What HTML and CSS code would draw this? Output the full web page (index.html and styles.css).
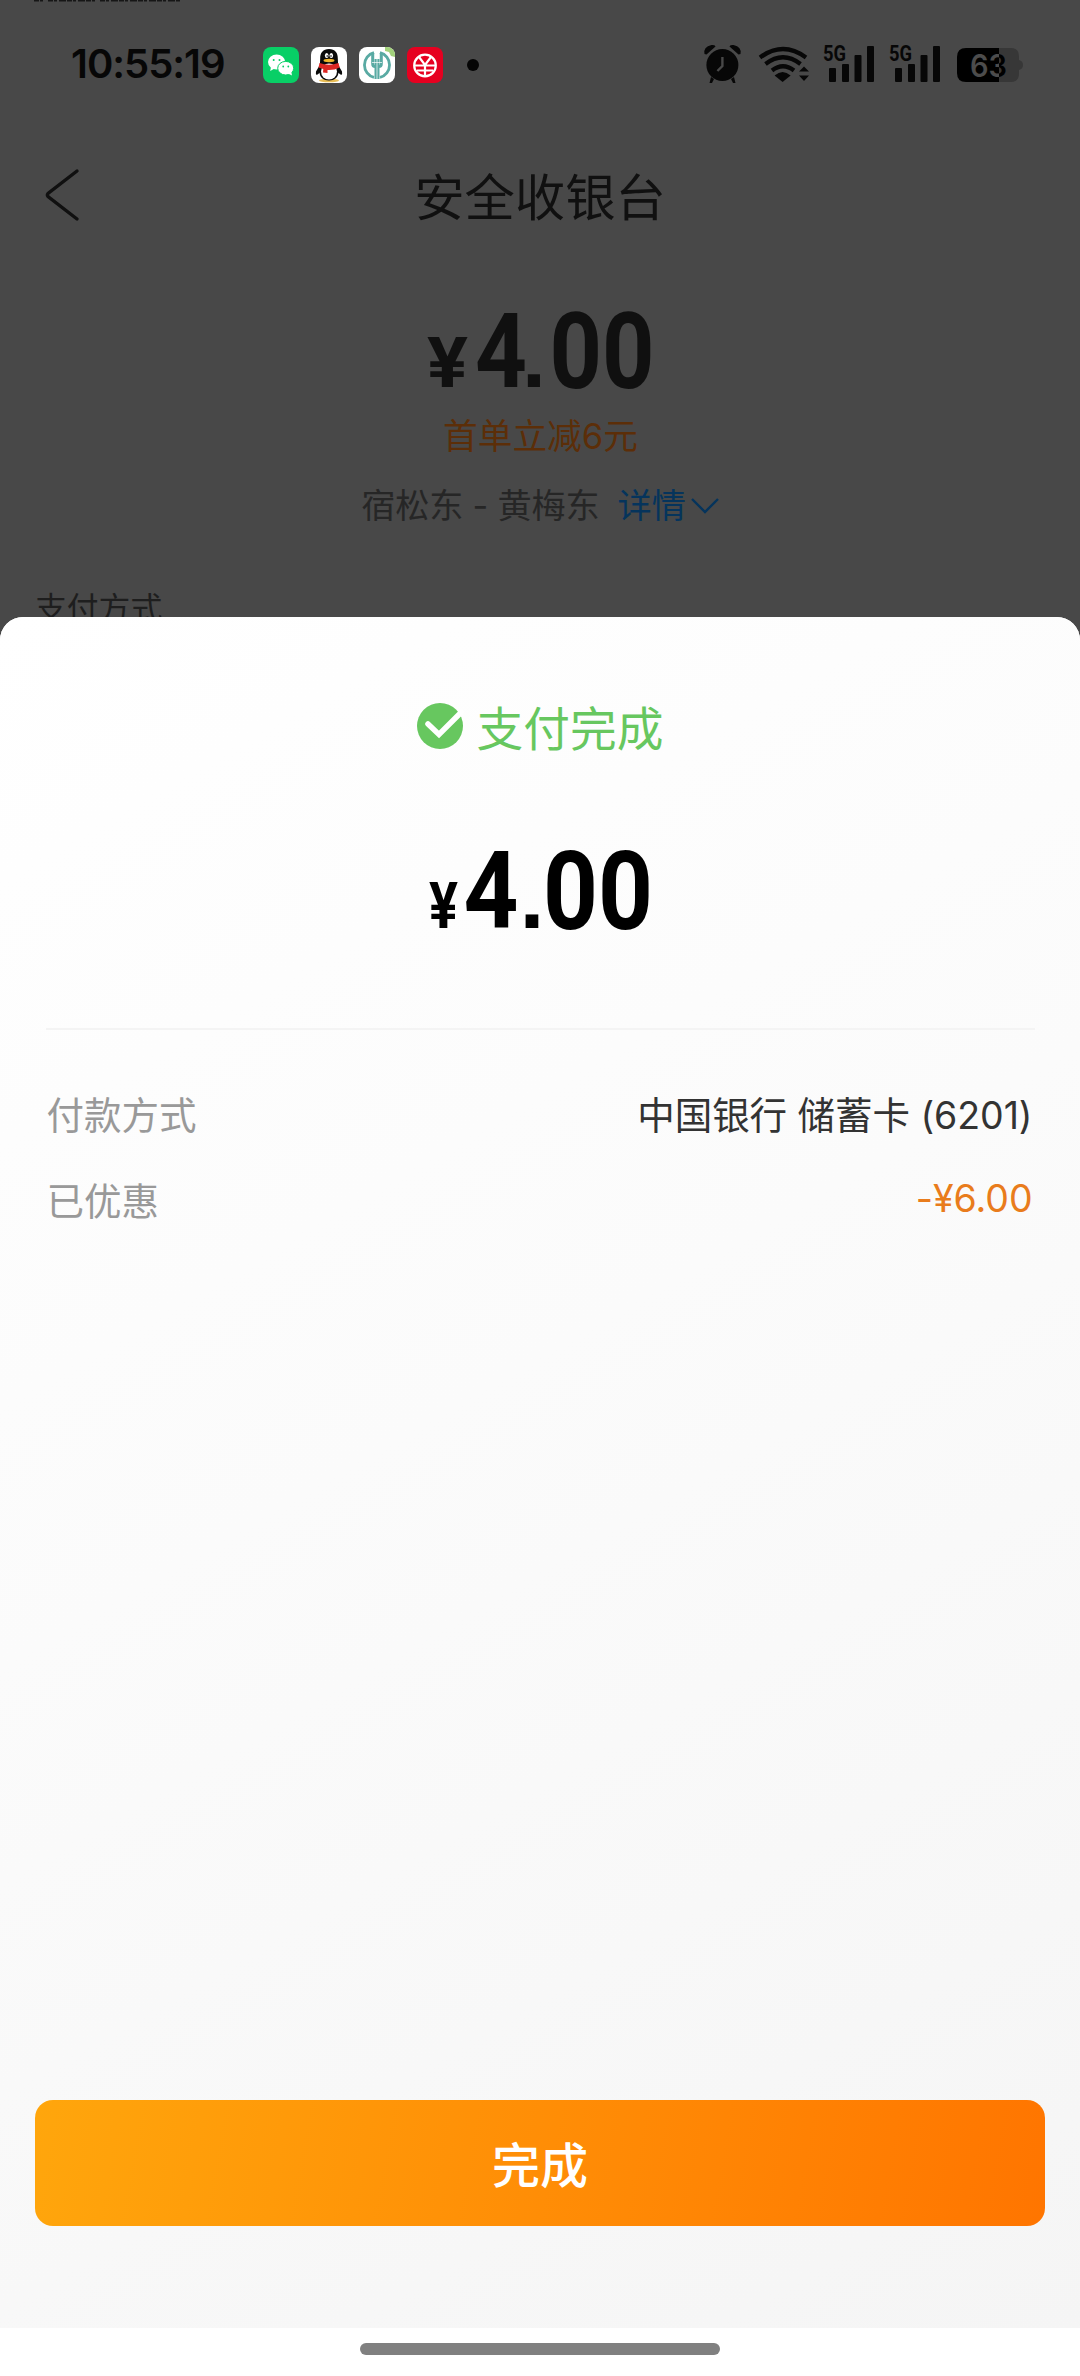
FILE: index.html
```html
<!DOCTYPE html>
<html lang="zh-CN">
<head>
<meta charset="utf-8">
<title>安全收银台</title>
<link rel="stylesheet" href="styles.css">
</head>
<body>
<div class="screen">
  <div class="cashier">
    <div class="status">
      <svg class="sliver" width="146" height="2" viewBox="0 0 146 2"><path d="M0 .7H10M14 .7H62M66 .7H146" stroke="#161616" stroke-width="1.6" stroke-dasharray="5 1 3 2 7 1"/></svg>
      <span class="clock">10:55:19</span>
      <div class="apps">
        <svg class="app" viewBox="0 0 36 36"><rect width="36" height="36" rx="8" fill="#08cf66"/><g fill="#fff"><ellipse cx="13.6" cy="15" rx="8.6" ry="7.4"/><path d="M8 20l-.8 4 4-2.200z"/><ellipse cx="22.700" cy="21.200" rx="8" ry="6.800" stroke="#08cf66" stroke-width="1"/><path d="M25 26.500l4 2-.8-4z"/></g><g fill="#08cf66"><circle cx="10.700" cy="13" r="1"/><circle cx="16.500" cy="13" r="1"/><circle cx="20.200" cy="19.500" r=".9"/><circle cx="25.300" cy="19.500" r=".9"/></g></svg>
        <svg class="app" viewBox="0 0 36 36"><rect width="36" height="36" rx="8" fill="#fff"/><ellipse cx="18" cy="33.500" rx="10" ry="1.800" fill="#e8bd55"/><path d="M10.500 15L5 24.500q-.6 3 .8 3.500l4-3zM25.500 15L31 24.500q.6 3-.8 3.500l-4-3z" fill="#0a0a0a"/><path d="M18 2c-6 0-9 4-8.800 9.500L8.500 25c0 5 4 8.500 9.500 8.500s9.500-3.500 9.500-8.500l-.7-13.500C27 6 24 2 18 2z" fill="#0a0a0a"/><ellipse cx="18" cy="24.500" rx="8" ry="8" fill="#fff"/><path d="M8.500 16q9.500 3.500 19 0l1.200 4.500q-6 3-12.200 2.500v3l-4.500-.5.3-3.500-4.800-1.500z" fill="#dc2723"/><ellipse cx="15.700" cy="8.500" rx="1.800" ry="2.600" fill="#fff"/><ellipse cx="20.300" cy="8.500" rx="1.800" ry="2.600" fill="#fff"/><circle cx="16.200" cy="9" r=".8"/><circle cx="20" cy="9" r=".8"/><ellipse cx="18" cy="13.500" rx="5.500" ry="1.700" fill="#efb52b"/></svg>
        <svg class="app" viewBox="0 0 36 36"><rect width="36" height="36" rx="8" fill="#fff"/><path d="M26 0h2a8 8 0 0 1 8 8v2l-4-1-2-4-4-1z" fill="#a3d27c"/><g fill="none" stroke="#59aaa3"><path d="M15 5.700a12.700 12.700 0 0 0 0 24.600M21 5.700a12.700 12.700 0 0 1 0 24.600" stroke-width="2.800"/><path d="M18 12v20" stroke-width="5"/><path d="M13.700 6v11q0 2.500 2.500 2.500h3.600q2.500 0 2.500-2.500V6" stroke-width="3"/></g><path d="M18 4v28M13 15.500h10" stroke="#fff" stroke-width=".7"/></svg>
        <svg class="app" viewBox="0 0 36 36"><rect width="36" height="36" rx="8" fill="#e60020"/><g fill="none" stroke="#fff" stroke-width="2.200"><circle cx="18" cy="18.500" r="10.800"/><path d="M12 10l6 8 6-8M7 18.500h22M10 23.500h16M18 17v12"/></g></svg>
        <i class="more"></i>
      </div>
      <svg class="signals" width="320" height="38" viewBox="704 45 320 38">
        <defs><linearGradient id="split" gradientUnits="userSpaceOnUse" x1="957" y1="0" x2="1020" y2="0"><stop offset=".667" stop-color="#4c4c4c"/><stop offset=".667" stop-color="#000"/></linearGradient></defs>
        <g fill="#070707">
          <circle cx="722.400" cy="65" r="16"/>
          <path d="M704.500 54q-1.500-7 7-9 4-.5 4 1.500l-9 8zM740.500 54q1.500-7-7-9-4-.5-4 1.500l9 8z"/>
          <path d="M711 77l3 2-2 4h-2.500zM734 77l-3 2 2 4h2.500z"/>
          <path d="M775 76q8-7 16 0l-8 6.500z" transform="translate(-.4 -.6)"/>
          <path d="M799 71.500l5-5 5 5zM799 75.500l5 5.500 5-5.500z"/>
          <rect x="829" y="68" width="7" height="14" rx="1"/><rect x="842" y="64" width="7" height="18" rx="1"/><rect x="854.500" y="55" width="7" height="27" rx="1"/><rect x="867" y="46" width="7" height="36" rx="1"/>
          <rect x="895" y="68" width="7" height="14" rx="1"/><rect x="908" y="64" width="7" height="18" rx="1"/><rect x="920.500" y="55" width="7" height="27" rx="1"/><rect x="933" y="46" width="7" height="36" rx="1"/>
        </g>
        <path d="M722.400 57v9l-5 5" fill="none" stroke="#484848" stroke-width="2.400"/>
        <path d="M760 57.500q23-17 46 0M765.500 64q17.500-13.500 35 0M772 70.500q11-8.500 22 0" fill="none" stroke="#070707" stroke-width="4.200"/>
        <text class="fiveg" x="823" y="61" textLength="23" lengthAdjust="spacingAndGlyphs">5G</text>
        <text class="fiveg" x="889" y="61" textLength="23" lengthAdjust="spacingAndGlyphs">5G</text>
        <path d="M966 48h33v34h-33q-9 0-9-9V57q0-9 9-9z" fill="#000"/>
        <path d="M999 48h12q8 0 8 9v3q4 1 4 5t-4 5v3q0 9-8 9h-12z" fill="#373737"/>
        <text class="charge" x="970" y="77" textLength="37" lengthAdjust="spacingAndGlyphs" fill="url(#split)">63</text>
      </svg>
    </div>
    <div class="nav">
      <svg class="back" width="34" height="52" viewBox="0 0 34 52"><path d="M32 2L3 24.500q-1.200 1.500 0 3L32 50" fill="none" stroke="#101010" stroke-width="3.400" stroke-linecap="round"/></svg>
      <h1 class="title">安全收银台</h1>
    </div>
    <svg class="amount" width="230" height="84" viewBox="426 308 230 84">
      <g class="din dim"><text x="428" y="387" font-size="71" textLength="41" lengthAdjust="spacingAndGlyphs">¥</text><text x="476" y="387" font-size="104" textLength="52" lengthAdjust="spacingAndGlyphs">4</text><text class="dot" x="523" y="387" font-size="86">.</text><text x="550.500" y="387.500" font-size="106" textLength="105" lengthAdjust="spacingAndGlyphs">00</text></g>
    </svg>
    <p class="promo">首单立减6元</p>
    <p class="route"><span>宿松东 - 黄梅东</span><span class="detail">详情</span><svg width="28" height="18" viewBox="0 0 28 18"><path d="M1 2l13 13L27 2" fill="none" stroke="#05345c" stroke-width="2.400"/></svg></p>
    <p class="method">支付方式</p>
  </div>
  <div class="sheet">
    <div class="done">
      <svg width="46" height="46" viewBox="0 0 46 46"><circle cx="23" cy="23" r="23" fill="#67c75f"/><path d="M11 21l11 10.500L44 9.500" fill="none" stroke="#fff" stroke-width="5.500" stroke-linecap="round"/></svg>
      <span class="done-text">支付完成</span>
    </div>
    <svg class="paid" width="226" height="86" viewBox="426 846 226 86">
      <g class="din"><text x="428" y="928" font-size="65" textLength="29" lengthAdjust="spacingAndGlyphs">¥</text><text x="462.500" y="928" font-size="108" textLength="55" lengthAdjust="spacingAndGlyphs">4</text><text class="dot" x="518.500" y="928" font-size="90">.</text><text x="542" y="928.500" font-size="110" textLength="110" lengthAdjust="spacingAndGlyphs">00</text></g>
    </svg>
    <div class="details">
      <div class="row"><span class="label">付款方式</span><span class="value">中国银行 储蓄卡 (6201)</span></div>
      <div class="row"><span class="label">已优惠</span><span class="value off">-¥6.00</span></div>
    </div>
    <button class="finish" type="button">完成</button>
  </div>
  <div class="home"><i></i></div>
</div>
</body>
</html>
```

FILE: styles.css
```css
* { box-sizing: border-box; margin: 0; padding: 0; }
body { background: #fff; font-family: Inter, "Noto Sans CJK SC", sans-serif; }
.screen { width: 1080px; height: 2376px; overflow: hidden; display: flex; flex-direction: column; }
svg { display: block; flex: none; overflow: visible; }
.cashier { height: 617px; flex: none; background: #484848; display: flex; flex-direction: column; align-items: center; }
.status { position: relative; width: 100%; height: 130px; flex: none; display: flex; padding: 0 56px 0 71px; }
.sliver { position: absolute; left: 34px; top: 0; }
.clock { width: 192px; padding-top: 40px; font-size: 40px; line-height: 48px; font-weight: 600; color: #070707; white-space: nowrap; letter-spacing: -1px; }
.apps { display: flex; gap: 12px; padding-top: 47px; align-items: flex-start; }
.app { width: 36px; height: 36px; }
.more { width: 12px; height: 12px; border-radius: 50%; background: #050505; margin: 12px 0 0 12px; }
.signals { margin: 45px 0 0 auto; }
.fiveg { font: 700 22px Roboto, sans-serif; fill: #070707; }
.charge { font: 600 31px Inter, sans-serif; }
.nav { width: 100%; height: 134px; flex: none; display: grid; grid-template-columns: 45px 36px 1fr 83px; align-items: center; }
.back { grid-column: 2; margin-top: -4px; }
.title { grid-column: 3; text-align: center; font-size: 50.300px; line-height: 74px; font-weight: 400; color: #101010; padding: 2px 0 0 2px; }
.amount { margin-top: 44px; }
.din { font-family: Roboto, sans-serif; font-weight: 700; fill: #000; }
.dot { font-family: "Liberation Sans", sans-serif; }
.dim { fill: #101010; }
.promo { margin-top: 19px; height: 50px; font-size: 34.700px; line-height: 50px; color: #5c2e08; padding-left: 1px; }
.route { margin-top: 20px; height: 50px; display: flex; align-items: center; font-size: 34.200px; line-height: 50px; color: #262626; }
.detail { margin: 0 5px 0 18px; color: #05345c; }
.route > span:first-child { letter-spacing: -.2px; }
.method { align-self: flex-start; margin: 54px 0 0 35px; height: 48px; font-size: 31.800px; line-height: 48px; color: #1e1e1e; }
.sheet { position: relative; height: 1711px; flex: none; background: linear-gradient(150deg, #fff 0%, #fbfbfb 45%, #f5f5f5 100%); display: flex; flex-direction: column; align-items: center; border-radius: 23px 23px 0 0; box-shadow: 0 -24px 0 0 #484848; clip-path: inset(0); }
.done { margin-top: 76px; height: 66px; display: flex; align-items: center; gap: 14px; font-size: 46.700px; line-height: 66px; color: #67c75f; }
.done-text { padding-top: 6px; }
.paid { margin-top: 87px; }
.details { width: 989px; margin-top: 96px; border-top: 2px solid #f4f4f4; padding-top: 39px; }
.row { height: 86px; display: flex; justify-content: space-between; align-items: center; padding: 0 2px 0 1px; font-size: 37.500px; }
.label { color: #999; }
.value { color: #333; letter-spacing: -.05px; }
.off { color: #e97c1c; }
.finish { width: 1010px; height: 126px; margin: auto 0 102px; padding-bottom: 3px; border: 0; border-radius: 18px; background: linear-gradient(100deg, #ffa60c, #ff7500); color: #fff; font: 500 48px/70px "Noto Sans CJK SC", sans-serif; }
.home { height: 48px; display: flex; justify-content: center; padding-top: 15px; background: #fff; }
.home i { width: 360px; height: 12px; border-radius: 6px; background: #808080; }
```
